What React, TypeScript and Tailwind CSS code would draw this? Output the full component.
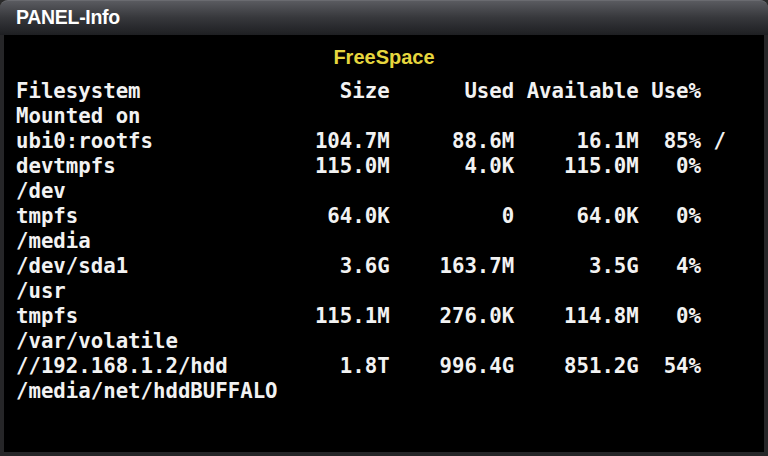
import React from "react";

type Row = { fs: string; size: string; used: string; avail: string; pct: string; mnt: string; inline?: boolean };

const rows: Row[] = [
  { fs: "ubi0:rootfs", size: "104.7M", used: "88.6M", avail: "16.1M", pct: "85", mnt: "/", inline: true },
  { fs: "devtmpfs", size: "115.0M", used: "4.0K", avail: "115.0M", pct: "0", mnt: "/dev" },
  { fs: "tmpfs", size: "64.0K", used: "0", avail: "64.0K", pct: "0", mnt: "/media" },
  { fs: "/dev/sda1", size: "3.6G", used: "163.7M", avail: "3.5G", pct: "4", mnt: "/usr" },
  { fs: "tmpfs", size: "115.1M", used: "276.0K", avail: "114.8M", pct: "0", mnt: "/var/volatile" },
  { fs: "//192.168.1.2/hdd", size: "1.8T", used: "996.4G", avail: "851.2G", pct: "54", mnt: "/media/net/hddBUFFALO" },
];

function fmt(fs: string, a: string, b: string, c: string, d: string) {
  return fs.padEnd(20) + " " + a.padStart(9) + " " + b.padStart(9) + " " + c.padStart(9) + " " + d;
}

export default function App() {
  const lines: string[] = [];
  lines.push(fmt("Filesystem", "Size", "Used", "Available", "Use%"));
  lines.push("Mounted on");
  for (const r of rows) {
    const base = fmt(r.fs, r.size, r.used, r.avail, r.pct.padStart(3) + "%");
    if (r.inline) {
      lines.push(base + " " + r.mnt);
    } else {
      lines.push(base);
      lines.push(r.mnt);
    }
  }
  return (
    <div className="w-[768px] h-[456px] bg-[#2a2a2a] flex flex-col overflow-hidden">
      <div className="h-[35px] shrink-0 rounded-t-[8px] bg-gradient-to-b from-[#5a5b60] via-[#36373b] to-[#1e1f22] flex items-center pl-[16px] border-t border-[#6a6b70]">
        <span className="text-white font-bold text-[19.5px] leading-none tracking-[-0.3px]" style={{ fontFamily: '"Liberation Sans", Arial, sans-serif' }}>
          PANEL-Info
        </span>
      </div>
      <div className="flex-1 border-x-[4px] border-b-[4px] border-[#262628] bg-black flex flex-col">
        <div
          className="mt-[10px] h-[24px] leading-[24px] text-center font-bold text-[20px] text-[#e6d63e]"
          style={{ fontFamily: '"Liberation Sans", Arial, sans-serif' }}
        >
          FreeSpace
        </div>
        <pre
          className="mt-[10px] pl-[12px] text-[20.7px] leading-[25px] font-bold text-[#f2f2f2] whitespace-pre"
          style={{ fontFamily: '"DejaVu Sans Mono", "Liberation Mono", monospace' }}
        >
          {lines.join("\n")}
        </pre>
      </div>
    </div>
  );
}
